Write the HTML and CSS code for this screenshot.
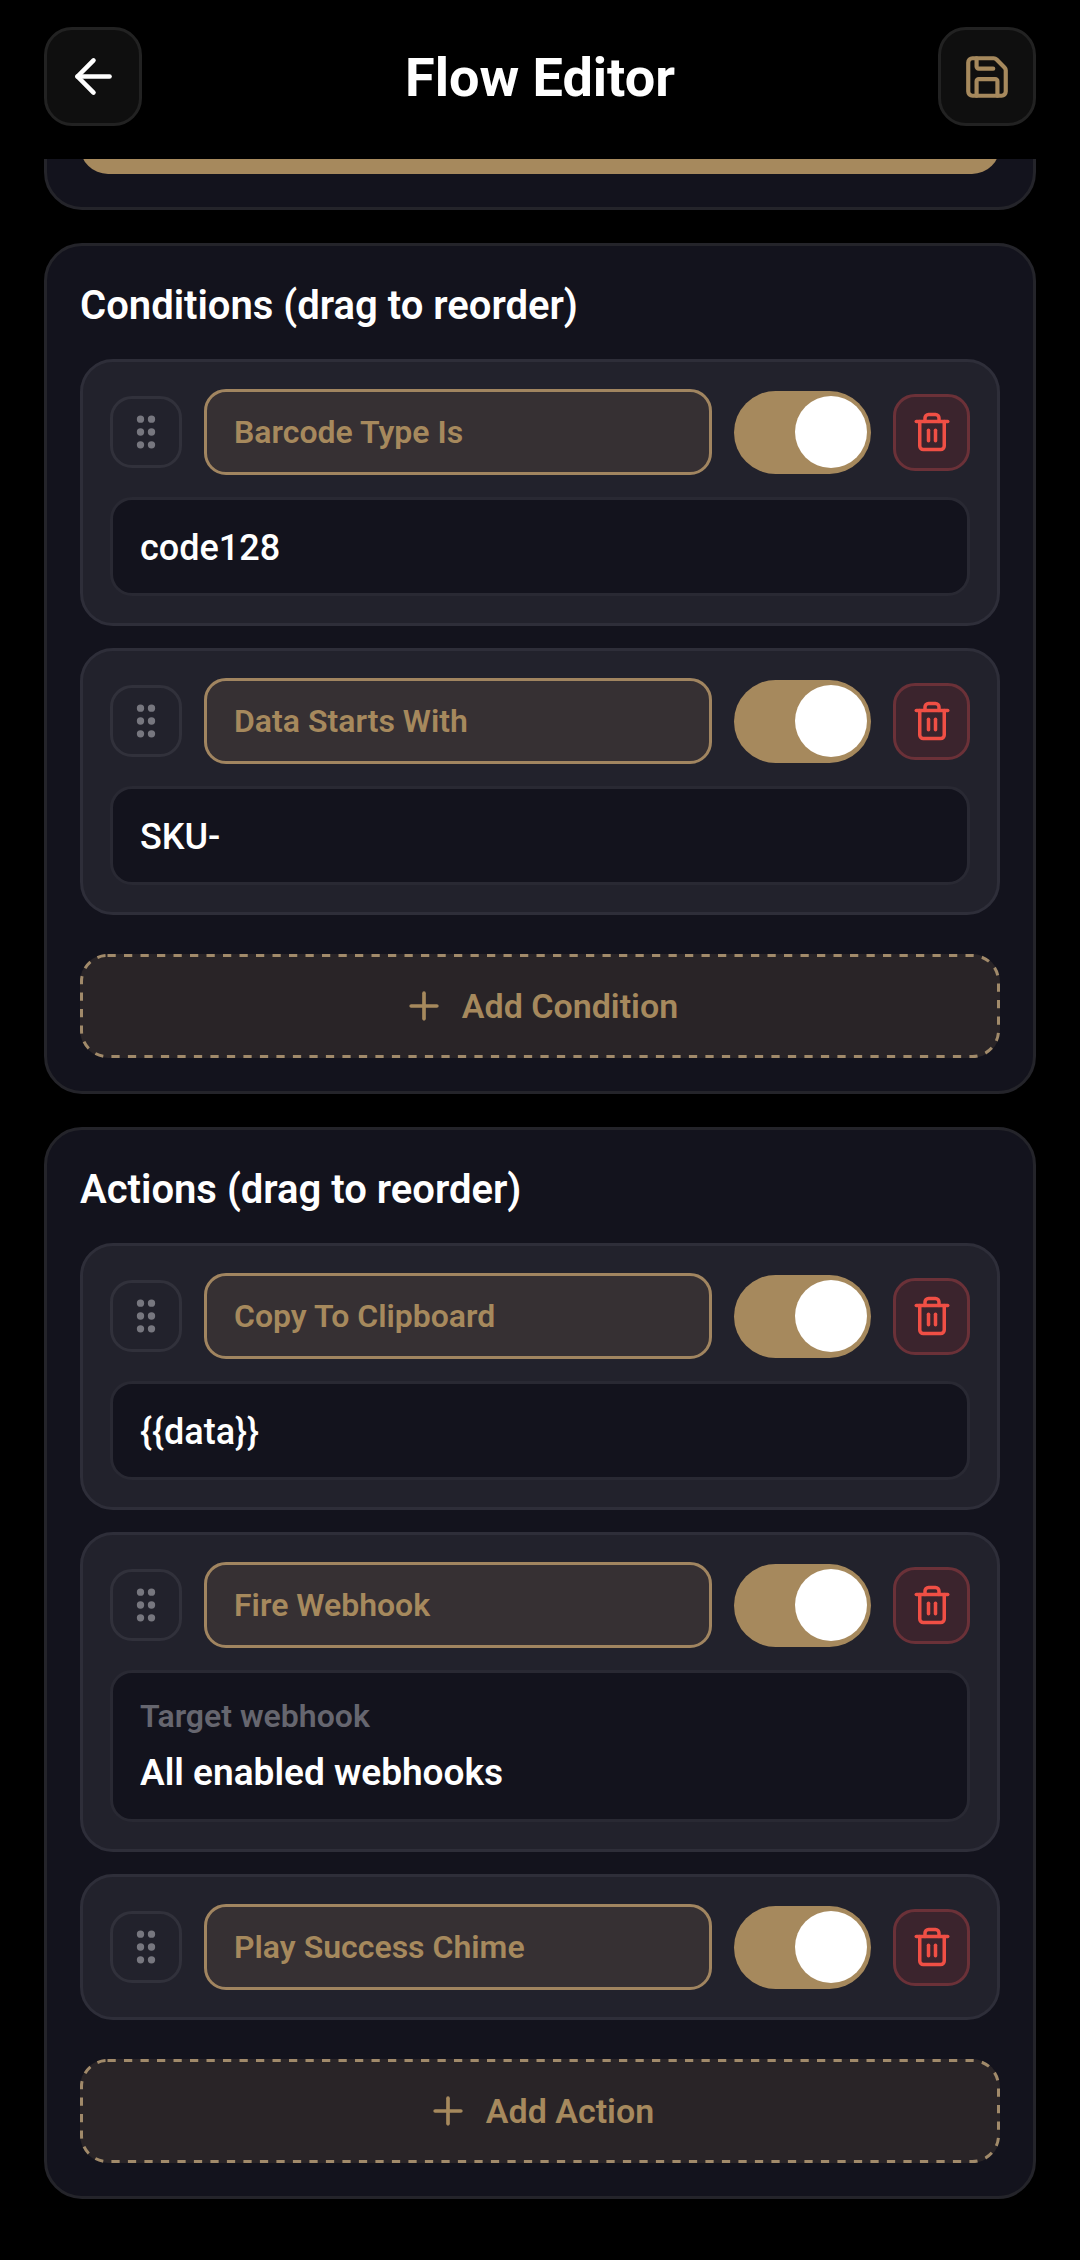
FILE: index.html
```html
<!DOCTYPE html>
<html lang="en">

<head>
  <meta charset="UTF-8">
  <meta name="viewport" content="width=device-width, initial-scale=1">
  <title>Flow Editor</title>
  <link rel="stylesheet" href="styles.css">
</head>

<body>
  <svg class="sprite" aria-hidden="true">
    <symbol id="icon-back" viewBox="0 0 24 24">
      <path d="m12 19-7-7 7-7" />
      <path d="M19 12H5" />
    </symbol>
    <symbol id="icon-save" viewBox="0 0 24 24">
      <path d="M15.2 3a2 2 0 0 1 1.4.6l3.8 3.8a2 2 0 0 1 .6 1.4V19a2 2 0 0 1-2 2H5a2 2 0 0 1-2-2V5a2 2 0 0 1 2-2z" />
      <path d="M17 21v-7a1 1 0 0 0-1-1H8a1 1 0 0 0-1 1v7" />
      <path d="M7 3v4a1 1 0 0 0 1 1h7" />
    </symbol>
    <symbol id="icon-grip" viewBox="0 0 24 24">
      <circle cx="9" cy="5" r="1" />
      <circle cx="15" cy="5" r="1" />
      <circle cx="9" cy="12" r="1" />
      <circle cx="15" cy="12" r="1" />
      <circle cx="9" cy="19" r="1" />
      <circle cx="15" cy="19" r="1" />
    </symbol>
    <symbol id="icon-trash" viewBox="0 0 24 24">
      <path d="M3 6h18" />
      <path d="M19 6v14a2 2 0 0 1-2 2H7a2 2 0 0 1-2-2V6" />
      <path d="M8 6V4a2 2 0 0 1 2-2h4a2 2 0 0 1 2 2v2" />
      <path d="M10 11v6" />
      <path d="M14 11v6" />
    </symbol>
    <symbol id="icon-plus" viewBox="0 0 24 24">
      <path d="M5 12h14" />
      <path d="M12 5v14" />
    </symbol>
  </svg>

  <header class="topbar">
    <button class="icon-btn" type="button" aria-label="Back"><svg class="icon icon-lg"><use href="#icon-back" /></svg></button>
    <h1 class="topbar-title">Flow Editor</h1>
    <button class="icon-btn icon-btn-save" type="button" aria-label="Save"><svg class="icon icon-md"><use href="#icon-save" /></svg></button>
  </header>

  <main class="content">
    <section class="panel panel-scrolled">
      <button class="primary-btn" type="button" aria-label="Continue"></button>
    </section>

    <section class="panel">
      <h2 class="panel-title">Conditions (drag to reorder)</h2>

      <div class="item-list">
        <div class="item">
          <div class="item-row">
            <button class="grip" type="button" aria-label="Drag"><svg class="icon icon-sm"><use href="#icon-grip" /></svg></button>
            <select class="type-select" aria-label="Condition type">
              <option>Barcode Type Is</option>
            </select>
            <input class="toggle" type="checkbox" aria-label="Enabled" checked>
            <button class="delete-btn" type="button" aria-label="Delete"><svg class="icon icon-xs"><use href="#icon-trash" /></svg></button>
          </div>
          <input class="value-input" type="text" aria-label="Value" value="code128">
        </div>

        <div class="item">
          <div class="item-row">
            <button class="grip" type="button" aria-label="Drag"><svg class="icon icon-sm"><use href="#icon-grip" /></svg></button>
            <select class="type-select" aria-label="Condition type">
              <option>Data Starts With</option>
            </select>
            <input class="toggle" type="checkbox" aria-label="Enabled" checked>
            <button class="delete-btn" type="button" aria-label="Delete"><svg class="icon icon-xs"><use href="#icon-trash" /></svg></button>
          </div>
          <input class="value-input" type="text" aria-label="Value" value="SKU-">
        </div>
      </div>

      <button class="add-btn" type="button">
        <svg class="add-outline" aria-hidden="true"><rect x="1.5" y="1.5" rx="26" /></svg>
        <svg class="icon icon-sm"><use href="#icon-plus" /></svg>
        Add Condition
      </button>
    </section>

    <section class="panel">
      <h2 class="panel-title">Actions (drag to reorder)</h2>

      <div class="item-list">
        <div class="item">
          <div class="item-row">
            <button class="grip" type="button" aria-label="Drag"><svg class="icon icon-sm"><use href="#icon-grip" /></svg></button>
            <select class="type-select" aria-label="Action type">
              <option>Copy To Clipboard</option>
            </select>
            <input class="toggle" type="checkbox" aria-label="Enabled" checked>
            <button class="delete-btn" type="button" aria-label="Delete"><svg class="icon icon-xs"><use href="#icon-trash" /></svg></button>
          </div>
          <input class="value-input" type="text" aria-label="Value" value="{{data}}">
        </div>

        <div class="item">
          <div class="item-row">
            <button class="grip" type="button" aria-label="Drag"><svg class="icon icon-sm"><use href="#icon-grip" /></svg></button>
            <select class="type-select" aria-label="Action type">
              <option>Fire Webhook</option>
            </select>
            <input class="toggle" type="checkbox" aria-label="Enabled" checked>
            <button class="delete-btn" type="button" aria-label="Delete"><svg class="icon icon-xs"><use href="#icon-trash" /></svg></button>
          </div>
          <div class="target">
            <label class="target-label" for="target-webhook">Target webhook</label>
            <select class="target-select" id="target-webhook">
              <option>All enabled webhooks</option>
            </select>
          </div>
        </div>

        <div class="item">
          <div class="item-row">
            <button class="grip" type="button" aria-label="Drag"><svg class="icon icon-sm"><use href="#icon-grip" /></svg></button>
            <select class="type-select" aria-label="Action type">
              <option>Play Success Chime</option>
            </select>
            <input class="toggle" type="checkbox" aria-label="Enabled" checked>
            <button class="delete-btn" type="button" aria-label="Delete"><svg class="icon icon-xs"><use href="#icon-trash" /></svg></button>
          </div>
        </div>
      </div>

      <button class="add-btn" type="button">
        <svg class="add-outline" aria-hidden="true"><rect x="1.5" y="1.5" rx="26" /></svg>
        <svg class="icon icon-sm"><use href="#icon-plus" /></svg>
        Add Action
      </button>
    </section>
  </main>
</body>

</html>
```
FILE: styles.css
```css
* {
  box-sizing: border-box;
}

body {
  margin: 0;
  background-color: #000;
  color: #fff;
  font-family: Roboto, "Liberation Sans", sans-serif;
}

button,
select,
input {
  margin: 0;
  font-family: inherit;
  color: inherit;
}

button {
  display: flex;
  align-items: center;
  justify-content: center;
  padding: 0;
  cursor: pointer;
}

select {
  appearance: none;
  cursor: pointer;
}

/* icons */
.sprite {
  display: none;
}

.icon {
  flex: none;
  fill: none;
  stroke: currentColor;
  stroke-width: 2;
  stroke-linecap: round;
  stroke-linejoin: round;
}

.icon-lg {
  width: 55px;
  height: 55px;
}

.icon-md {
  width: 50px;
  height: 50px;
}

.icon-sm {
  width: 44px;
  height: 44px;
}

.icon-xs {
  width: 42px;
  height: 42px;
}

/* top bar stays over the scrolled content */
.topbar {
  position: sticky;
  top: 0;
  z-index: 1;
  display: flex;
  align-items: center;
  justify-content: space-between;
  padding: 27px 44px 33px;
  background-color: #000;
}

.topbar-title {
  margin: 0;
  padding-top: 2px;
  font-size: 54px;
  line-height: 66px;
  font-weight: 700;
}

.icon-btn {
  width: 98px;
  height: 99px;
  background-color: #0f0f0f;
  border: 3px solid #222;
  border-radius: 28px;
}

.icon-btn-save {
  color: #a6895d;
}

.content {
  display: flex;
  flex-direction: column;
  gap: 33px;
  padding: 0 44px 60px;
}

.panel {
  padding: 33px;
  background-color: #13131d;
  border: 3px solid #24242a;
  border-radius: 38px;
}

.panel-scrolled {
  margin-top: -125px;
}

.primary-btn {
  width: 100%;
  height: 104px;
  background-color: #a6895d;
  border: none;
  border-radius: 28px;
}

.panel-title {
  margin: 0 0 26px;
  font-size: 40px;
  line-height: 54px;
  font-weight: 600;
}

.item-list {
  display: flex;
  flex-direction: column;
  gap: 22px;
}

.item {
  display: flex;
  flex-direction: column;
  gap: 22px;
  padding: 27px;
  background-color: #22222c;
  border: 3px solid #2e2e39;
  border-radius: 33px;
}

.item-row {
  display: flex;
  align-items: center;
  gap: 22px;
}

.grip {
  width: 72px;
  height: 72px;
  color: #77777f;
  background-color: transparent;
  border: 3px solid #31313b;
  border-radius: 22px;
}

.type-select {
  flex: 1;
  min-width: 0;
  height: 86px;
  padding: 0 27px;
  font-size: 32px;
  font-weight: 600;
  color: #a6895d;
  background-color: #363033;
  border: 3px solid #a18560;
  border-radius: 22px;
}

.toggle {
  appearance: none;
  display: flex;
  align-items: center;
  justify-content: flex-end;
  width: 137px;
  height: 83px;
  padding: 4px;
  background-color: #a6895d;
  border-radius: 42px;
  cursor: pointer;
}

.toggle::before {
  content: "";
  width: 72px;
  height: 72px;
  background-color: #fff;
  border-radius: 50%;
}

.toggle:not(:checked) {
  justify-content: flex-start;
  background-color: #3a3a44;
}

.delete-btn {
  width: 77px;
  height: 77px;
  color: #f04f45;
  background-color: #3b242d;
  border: 3px solid #6b3138;
  border-radius: 22px;
}

.value-input,
.target {
  width: 100%;
  padding: 0 27px;
  background-color: #13131d;
  border: 3px solid #292933;
  border-radius: 22px;
}

.value-input {
  height: 99px;
  padding-top: 2px;
  font-size: 36px;
  font-weight: 500;
}

.target {
  display: flex;
  flex-direction: column;
  gap: 9px;
  padding-top: 22px;
  padding-bottom: 22px;
}

.target-label {
  font-size: 32px;
  line-height: 42px;
  font-weight: 600;
  color: #66666f;
}

.target-select {
  height: 51px;
  padding: 2px 0 0;
  font-size: 37px;
  font-weight: 600;
  background-color: transparent;
  border: none;
}

.add-btn {
  position: relative;
  gap: 16px;
  width: 100%;
  height: 104px;
  margin-top: 39px;
  font-size: 34px;
  font-weight: 600;
  color: #a6895d;
  background-color: #292427;
  border: none;
  border-radius: 28px;
}

/* longer dashes than border-style: dashed gives */
.add-outline {
  position: absolute;
  inset: 0;
  width: 100%;
  height: 100%;
}

.add-outline rect {
  width: calc(100% - 3px);
  height: calc(100% - 3px);
  fill: none;
  stroke: #a18a6a;
  stroke-width: 3;
  stroke-dasharray: 8.25;
}
```
